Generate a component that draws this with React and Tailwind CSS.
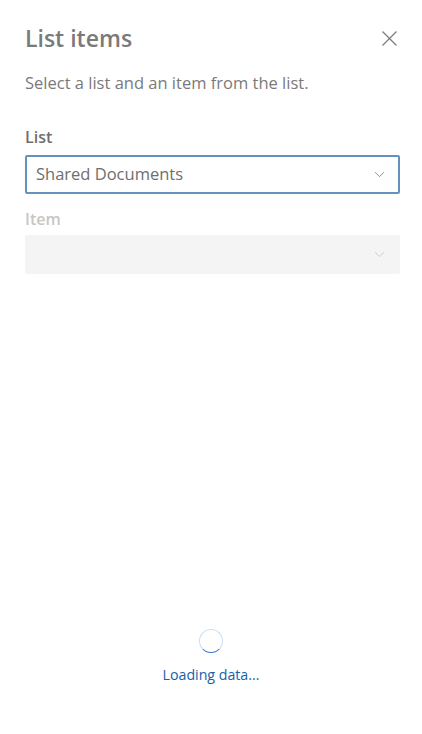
import { ChevronDown } from 'lucide-react'

const font = { fontFamily: '"Open Sans", "Noto Sans", sans-serif' }

export default function App() {
  return (
    <div className="flex h-[734px] w-[422px] flex-col bg-white" style={font}>
      <div className="flex items-start justify-between pl-[25px] pr-[25px] pt-[21px]">
        <h1 className="text-[23px] font-semibold leading-[34px] text-[#7a7a7a]">List items</h1>
        <button className="mt-[10px] text-[#7a7a7a]">
          <svg width="15" height="15" viewBox="0 0 15 15" fill="none" stroke="currentColor" strokeWidth="1.2">
            <path d="M0.5 0.5L14.5 14.5M14.5 0.5L0.5 14.5" />
          </svg>
        </button>
      </div>

      <div className="flex flex-col pl-[25px] pr-[22px]">
        <p className="mt-[16px] text-[16.5px] leading-[24px] text-[#7a7a7a]">
          Select a list and an item from the list.
        </p>

        <label className="mt-[30px] text-[16px] font-semibold leading-[24px] text-[#6e6e6e]">List</label>
        <div className="mt-[6px] flex h-[39px] items-center justify-between rounded-[2px] border-2 border-[#6592bb] pl-[9px] pr-[10px]">
          <span className="text-[16.5px] text-[#6e6e6e]">Shared Documents</span>
          <ChevronDown size={17} strokeWidth={1.2} className="text-[#7a7a7a]" />
        </div>

        <label className="mt-[13px] text-[16px] font-semibold leading-[24px] text-[#c8c6c4]">Item</label>
        <div className="mt-[4px] flex h-[39px] items-center justify-end rounded-[2px] bg-[#f4f4f4] pr-[12px]">
          <ChevronDown size={17} strokeWidth={1.2} className="text-[#c8c6c4]" />
        </div>
      </div>

      <div className="mt-auto mb-[49px] flex flex-col items-center gap-[11px]">
        <div className="h-[24px] w-[24px] rotate-180 rounded-full border-[1.5px] border-[#c7e0f4] border-t-[#3a7bc0]" />
        <span className="text-[14.2px] text-[#1462a8]">Loading data...</span>
      </div>
    </div>
  )
}
